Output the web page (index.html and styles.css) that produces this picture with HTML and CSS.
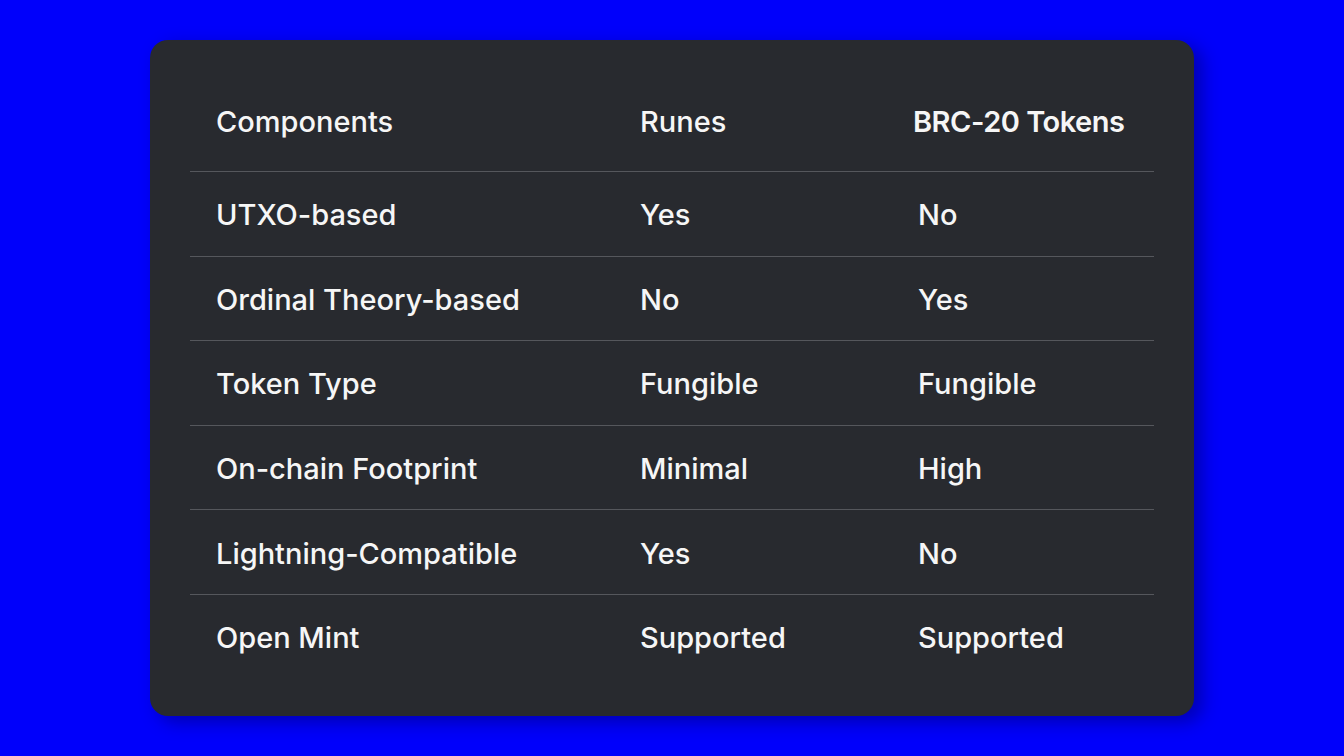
FILE: index.html
```html
<!DOCTYPE html>
<html lang="en">
<head>
<meta charset="utf-8">
<title>Runes vs BRC-20</title>
<link rel="stylesheet" href="styles.css">
</head>
<body>
<main class="stage">
  <section class="card">
    <div class="table">
      <div class="row head">
        <div class="cell">Components</div>
        <div class="cell">Runes</div>
        <div class="cell brc">BRC-20 Tokens</div>
      </div>
      <div class="row">
        <div class="cell">UTXO-based</div>
        <div class="cell">Yes</div>
        <div class="cell">No</div>
      </div>
      <div class="row">
        <div class="cell">Ordinal Theory-based</div>
        <div class="cell">No</div>
        <div class="cell">Yes</div>
      </div>
      <div class="row">
        <div class="cell">Token Type</div>
        <div class="cell">Fungible</div>
        <div class="cell">Fungible</div>
      </div>
      <div class="row">
        <div class="cell">On-chain Footprint</div>
        <div class="cell">Minimal</div>
        <div class="cell">High</div>
      </div>
      <div class="row">
        <div class="cell">Lightning-Compatible</div>
        <div class="cell">Yes</div>
        <div class="cell">No</div>
      </div>
      <div class="row last">
        <div class="cell">Open Mint</div>
        <div class="cell">Supported</div>
        <div class="cell">Supported</div>
      </div>
    </div>
  </section>
</main>
</body>
</html>
```

FILE: styles.css
```css
* { box-sizing: border-box; }
html, body {
  margin: 0;
  padding: 0;
  background: #0000fb;
}
.stage {
  width: 1344px;
  height: 756px;
  padding: 40px 150px;
}
.card {
  width: 1044px;
  height: 676px;
  background: #282a2f;
  border-radius: 18px;
  box-shadow: 8px 6px 18px rgba(0, 0, 40, 0.35);
  padding: 31px 40px 0 40px;
  font-family: "Inter", "Liberation Sans", sans-serif;
  color: #f6f6f6;
  font-size: 29px;
  font-weight: 500;
}
.table {
  display: flex;
  flex-direction: column;
}
.row {
  display: grid;
  grid-template-columns: 424px 278px 1fr;
  height: 84.6px;
  align-items: center;
  border-top: 1px solid #55575c;
  padding-top: 2px;
}
.row.head {
  border-top: none;
  height: 100px;
  padding-top: 0;
}
.cell {
  padding-left: 26px;
  white-space: nowrap;
}
.brc {
  padding-left: 21px;
  font-weight: 600;
  letter-spacing: -0.5px;
}
```
